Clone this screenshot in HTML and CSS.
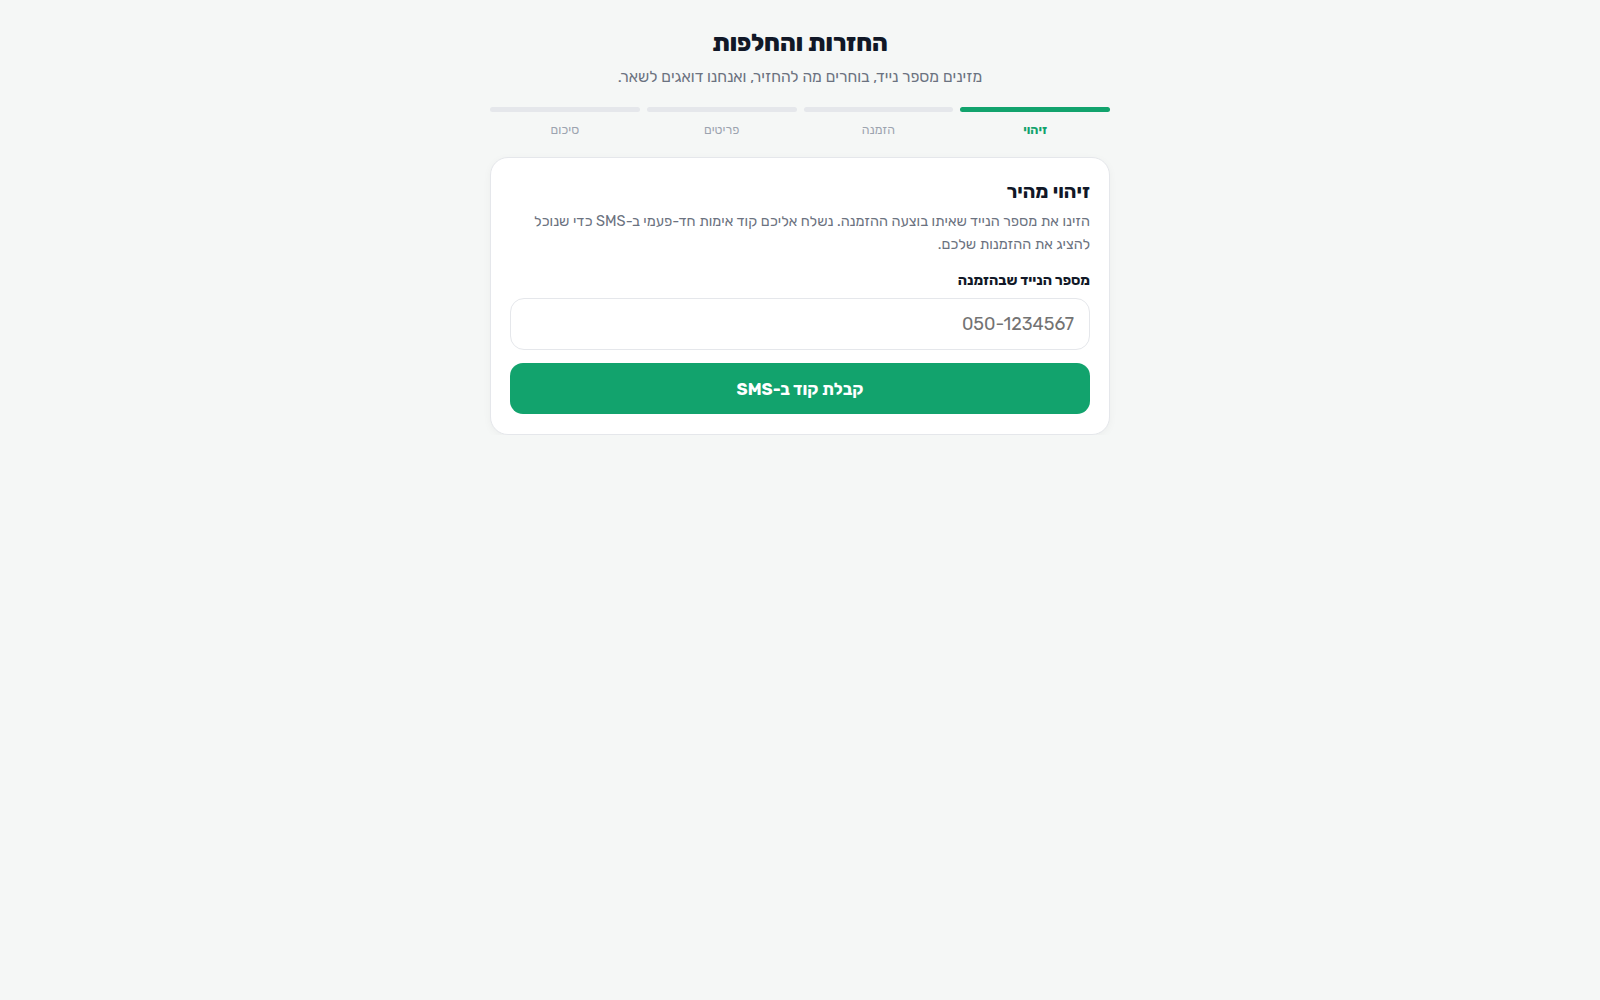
FILE: index.html
```html
<!DOCTYPE html>
<html lang="he" dir="rtl">
<head>
<meta charset="utf-8">
<title>החזרות והחלפות</title>
<link rel="stylesheet" href="styles.css">
</head>
<body>
<main class="wrap">
  <h1 class="title">החזרות והחלפות</h1>
  <p class="subtitle">מזינים מספר נייד, בוחרים מה להחזיר, ואנחנו דואגים לשאר.</p>
  <ol class="steps">
    <li class="step active"><span class="bar"></span><span class="step-label">זיהוי</span></li>
    <li class="step"><span class="bar"></span><span class="step-label">הזמנה</span></li>
    <li class="step"><span class="bar"></span><span class="step-label">פריטים</span></li>
    <li class="step"><span class="bar"></span><span class="step-label">סיכום</span></li>
  </ol>
  <section class="card">
    <h2 class="card-title">זיהוי מהיר</h2>
    <p class="card-text">הזינו את מספר הנייד שאיתו בוצעה ההזמנה. נשלח אליכם קוד אימות חד-פעמי ב-SMS כדי שנוכל להציג את ההזמנות שלכם.</p>
    <label class="field-label" for="phone">מספר הנייד שבהזמנה</label>
    <input class="field" id="phone" type="tel" dir="rtl" placeholder="050-1234567">
    <button class="btn" type="button">קבלת קוד ב-SMS</button>
  </section>
</main>
</body>
</html>
```

FILE: styles.css
```css
* { box-sizing: border-box; }
html, body { margin: 0; padding: 0; }
body {
  background: #f5f7f6;
  font-family: "Rubik", "Noto Sans Hebrew", "Liberation Sans", "DejaVu Sans", sans-serif;
  color: #111827;
}
.wrap {
  width: 620px;
  margin: 0 auto;
  padding-top: 27px;
}
.title {
  margin: 0;
  text-align: center;
  font-size: 24px;
  line-height: 32px;
  font-weight: 800;
  color: #111827;
}
.subtitle {
  margin: 7px 0 0;
  text-align: center;
  font-size: 15.7px;
  line-height: 22px;
  color: #6b7280;
}
.steps {
  list-style: none;
  margin: 19px 0 0;
  padding: 0;
  display: grid;
  grid-template-columns: repeat(4, 1fr);
  gap: 7px;
}
.step {
  display: flex;
  flex-direction: column;
  align-items: center;
  gap: 9px;
}
.bar {
  display: block;
  width: 100%;
  height: 5px;
  border-radius: 3px;
  background: #e5e7eb;
}
.step-label {
  font-size: 12.5px;
  line-height: 18px;
  color: #9ca3af;
}
.step.active .bar { background: #12a36d; }
.step.active .step-label { color: #12a36d; font-weight: 700; }
.card {
  margin-top: 18px;
  background: #fff;
  border: 1px solid #e5e7eb;
  border-radius: 18px;
  padding: 20px 19px 20px;
  box-shadow: 0 2px 8px rgba(0,0,0,0.04);
}
.card-title {
  margin: 0;
  font-size: 19.5px;
  line-height: 28px;
  font-weight: 700;
}
.card-text {
  margin: 4px 0 0;
  font-size: 14.5px;
  line-height: 23px;
  color: #6b7280;
}
.field-label {
  display: block;
  margin-top: 15px;
  font-size: 14.4px;
  line-height: 20px;
  font-weight: 700;
  color: #111827;
}
.field {
  display: block;
  width: 100%;
  margin-top: 7px;
  height: 52px;
  border: 1px solid #e5e7eb;
  border-radius: 14px;
  padding: 0 15px;
  font-family: inherit;
  font-size: 18px;
  text-align: right;
  direction: rtl;
  color: #111827;
  background: #fff;
  outline: none;
}
.field::placeholder { color: #737373; }
.btn {
  display: block;
  width: 100%;
  margin-top: 13px;
  height: 51px;
  border: 0;
  border-radius: 13px;
  background: #12a36d;
  color: #fff;
  font-family: inherit;
  font-size: 16.8px;
  font-weight: 700;
  cursor: pointer;
}
```
